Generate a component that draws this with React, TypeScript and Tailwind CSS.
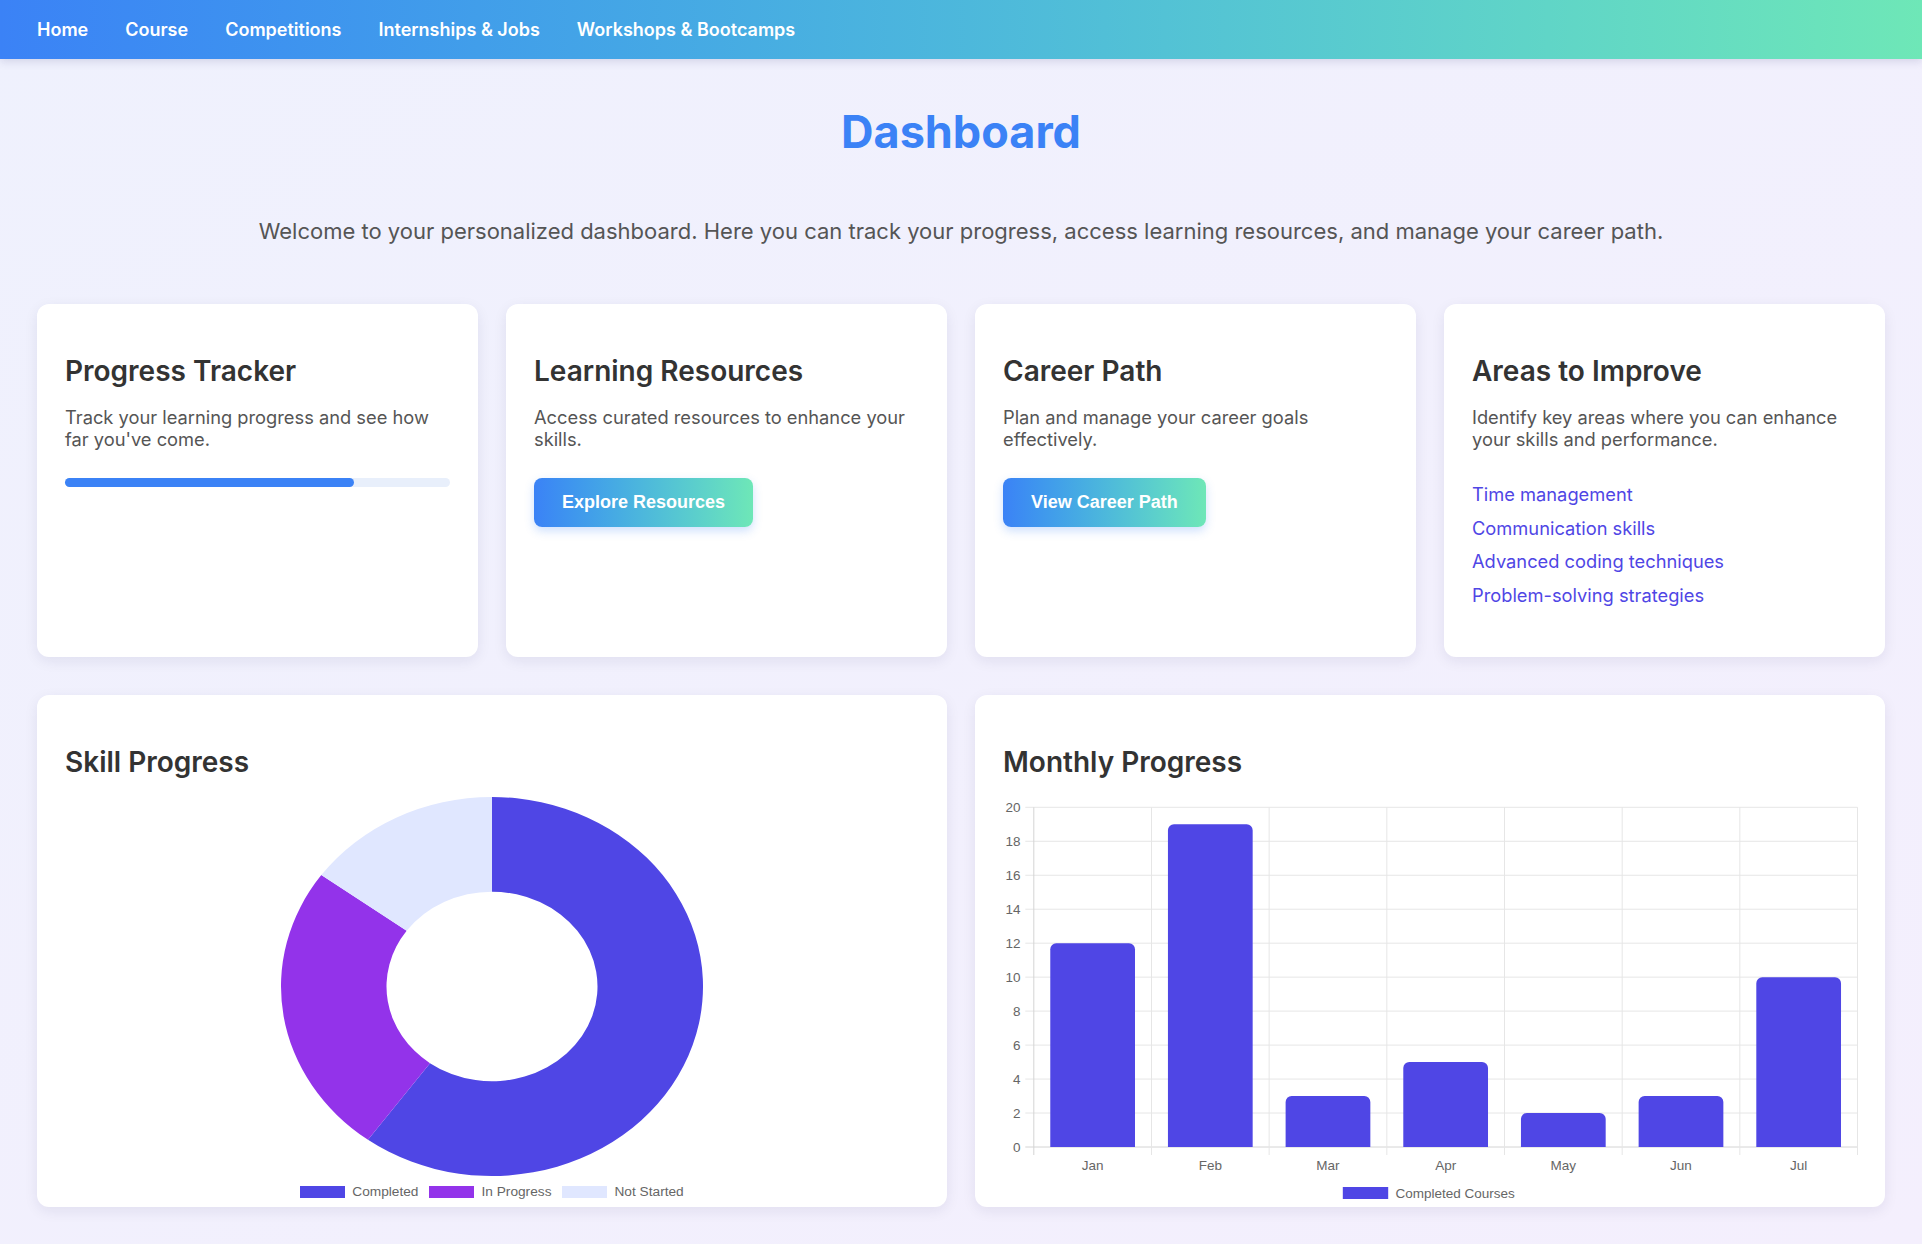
import React from 'react'

const navLinks = ['Home', 'Course', 'Competitions', 'Internships & Jobs', 'Workshops & Bootcamps']

const monthly = [
  { m: 'Jan', v: 12 },
  { m: 'Feb', v: 19 },
  { m: 'Mar', v: 3 },
  { m: 'Apr', v: 5 },
  { m: 'May', v: 2 },
  { m: 'Jun', v: 3 },
  { m: 'Jul', v: 10 },
]

const improve = ['Time management', 'Communication skills', 'Advanced coding techniques', 'Problem-solving strategies']

function Card({ title, desc, children }: { title: string; desc: string; children?: React.ReactNode }) {
  return (
    <div className="bg-white rounded-xl shadow-[0_4px_14px_rgba(30,30,80,0.08)] h-[353px] px-7 pt-[50px]">
      <h2 className="text-[28px] leading-[35px] font-semibold text-[#333]">{title}</h2>
      <p className="mt-[18px] text-[18.3px] leading-[21.6px] text-[#555]">{desc}</p>
      {children}
    </div>
  )
}

function GradientButton({ label }: { label: string }) {
  return (
    <button className="mt-7 rounded-lg bg-linear-to-r from-[#3b82f6] to-[#6ee7b7] px-7 py-[14px] text-[18px] leading-[21px] font-bold text-white font-['Liberation_Sans',Arial,sans-serif] shadow-[0_4px_10px_rgba(59,130,246,0.25)]">
      {label}
    </button>
  )
}

function Donut() {
  return (
    <div className="flex flex-col items-center">
      <svg viewBox="-100 -100 200 200" preserveAspectRatio="none" className="mt-[17px] w-[422px] h-[379px] block">
        <path d="M 0 -100 A 100 100 0 1 1 -58.78 80.9 L -29.39 40.45 A 50 50 0 1 0 0 -50 Z" fill="#4f46e5" />
        <path d="M -58.78 80.9 A 100 100 0 0 1 -80.9 -58.78 L -40.45 -29.39 A 50 50 0 0 0 -29.39 40.45 Z" fill="#9333ea" />
        <path d="M -80.9 -58.78 A 100 100 0 0 1 0 -100 L 0 -50 A 50 50 0 0 0 -40.45 -29.39 Z" fill="#e0e7ff" />
      </svg>
      <div className="mt-[10px] flex items-center gap-[11px] h-[12px] font-['Liberation_Sans',Arial,sans-serif] text-[13.7px] text-[#666]">
        {[
          ['Completed', 'bg-[#4f46e5]'],
          ['In Progress', 'bg-[#9333ea]'],
          ['Not Started', 'bg-[#e0e7ff]'],
        ].map(([l, c]) => (
          <div key={l} className="flex items-center gap-[7px]">
            <span className={`block w-[45px] h-[12px] ${c}`} />
            <span>{l}</span>
          </div>
        ))}
      </div>
    </div>
  )
}

function BarChart() {
  const plotL = 58.8
  const plotR = 882.5
  const base = 356
  const unit = 16.985
  const cat = (plotR - plotL) / 7
  const barW = cat * 0.72
  const y = (v: number) => base - v * unit
  const ticks = [0, 2, 4, 6, 8, 10, 12, 14, 16, 18, 20]
  return (
    <svg width="909" height="417" className="block mt-[11px]" fontFamily="'Liberation Sans', Arial, sans-serif" fontSize="13.5">
      {ticks.map((t) => (
        <g key={t}>
          <line x1={plotL - 8.5} x2={plotR} y1={y(t)} y2={y(t)} stroke={t === 0 ? '#d4d4d4' : '#e6e6e6'} strokeWidth="1" />
          <text x="45.5" y={y(t)} textAnchor="end" dominantBaseline="central" fill="#666">
            {t}
          </text>
        </g>
      ))}
      {Array.from({ length: 8 }).map((_, i) => (
        <line
          key={i}
          x1={plotL + i * cat}
          x2={plotL + i * cat}
          y1={y(20)}
          y2={base + 8}
          stroke={i === 0 ? '#d4d4d4' : '#e6e6e6'}
          strokeWidth="1"
        />
      ))}
      {monthly.map((d, i) => {
        const x = plotL + i * cat + (cat - barW) / 2
        const top = y(d.v)
        const r = 6
        return (
          <g key={d.m}>
            <path
              d={`M ${x} ${base} L ${x} ${top + r} A ${r} ${r} 0 0 1 ${x + r} ${top} L ${x + barW - r} ${top} A ${r} ${r} 0 0 1 ${x + barW} ${top + r} L ${x + barW} ${base} Z`}
              fill="#4f46e5"
            />
            <text x={plotL + i * cat + cat / 2} y="374" textAnchor="middle" dominantBaseline="central" fill="#666">
              {d.m}
            </text>
          </g>
        )
      })}
      <rect x="367.8" y="396" width="45.4" height="12" fill="#4f46e5" />
      <text x="420.5" y="402" dominantBaseline="central" fill="#666">
        Completed Courses
      </text>
    </svg>
  )
}

export default function App() {
  return (
    <div className="min-h-screen bg-linear-to-br from-[#eff1fd] to-[#f4effd] font-['Inter',sans-serif] pb-[37px]">
      <nav className="h-[59px] bg-linear-to-r from-[#3b82f6] to-[#6ee7b7] shadow-[0_3px_8px_rgba(60,60,120,0.15)] flex items-center px-[37px] gap-[37px]">
        {navLinks.map((l) => (
          <a key={l} href="#" className="text-white text-[18px] font-semibold">
            {l}
          </a>
        ))}
      </nav>

      <h1 className="mt-[44px] text-center text-[45px] leading-[58px] font-bold text-[#3b82f6]">Dashboard</h1>
      <p className="mt-[55px] text-center text-[22px] leading-[30px] text-[#555]">
        Welcome to your personalized dashboard. Here you can track your progress, access learning resources, and manage your career path.
      </p>

      <div className="px-[37px] mt-[58px]">
        <div className="grid grid-cols-4 gap-7">
          <Card title="Progress Tracker" desc="Track your learning progress and see how far you've come.">
            <div className="mt-7 h-[9px] rounded-full bg-[#e8effb]">
              <div className="h-full w-3/4 rounded-full bg-[#3b82f6]" />
            </div>
          </Card>
          <Card title="Learning Resources" desc="Access curated resources to enhance your skills.">
            <GradientButton label="Explore Resources" />
          </Card>
          <Card title="Career Path" desc="Plan and manage your career goals effectively.">
            <GradientButton label="View Career Path" />
          </Card>
          <Card title="Areas to Improve" desc="Identify key areas where you can enhance your skills and performance.">
            <ul className="mt-7">
              {improve.map((i) => (
                <li key={i} className="py-[6px] text-[18.3px] leading-[21.6px] text-[#4f46e5]">
                  {i}
                </li>
              ))}
            </ul>
          </Card>
        </div>

        <div className="grid grid-cols-2 gap-7 mt-[38px]">
          <div className="bg-white rounded-xl shadow-[0_4px_14px_rgba(30,30,80,0.08)] h-[512px] pt-[50px]">
            <h2 className="px-7 text-[28px] leading-[35px] font-semibold text-[#333]">Skill Progress</h2>
            <Donut />
          </div>
          <div className="bg-white rounded-xl shadow-[0_4px_14px_rgba(30,30,80,0.08)] h-[512px] pt-[50px] overflow-hidden">
            <h2 className="px-7 text-[28px] leading-[35px] font-semibold text-[#333]">Monthly Progress</h2>
            <BarChart />
          </div>
        </div>
      </div>
    </div>
  )
}
